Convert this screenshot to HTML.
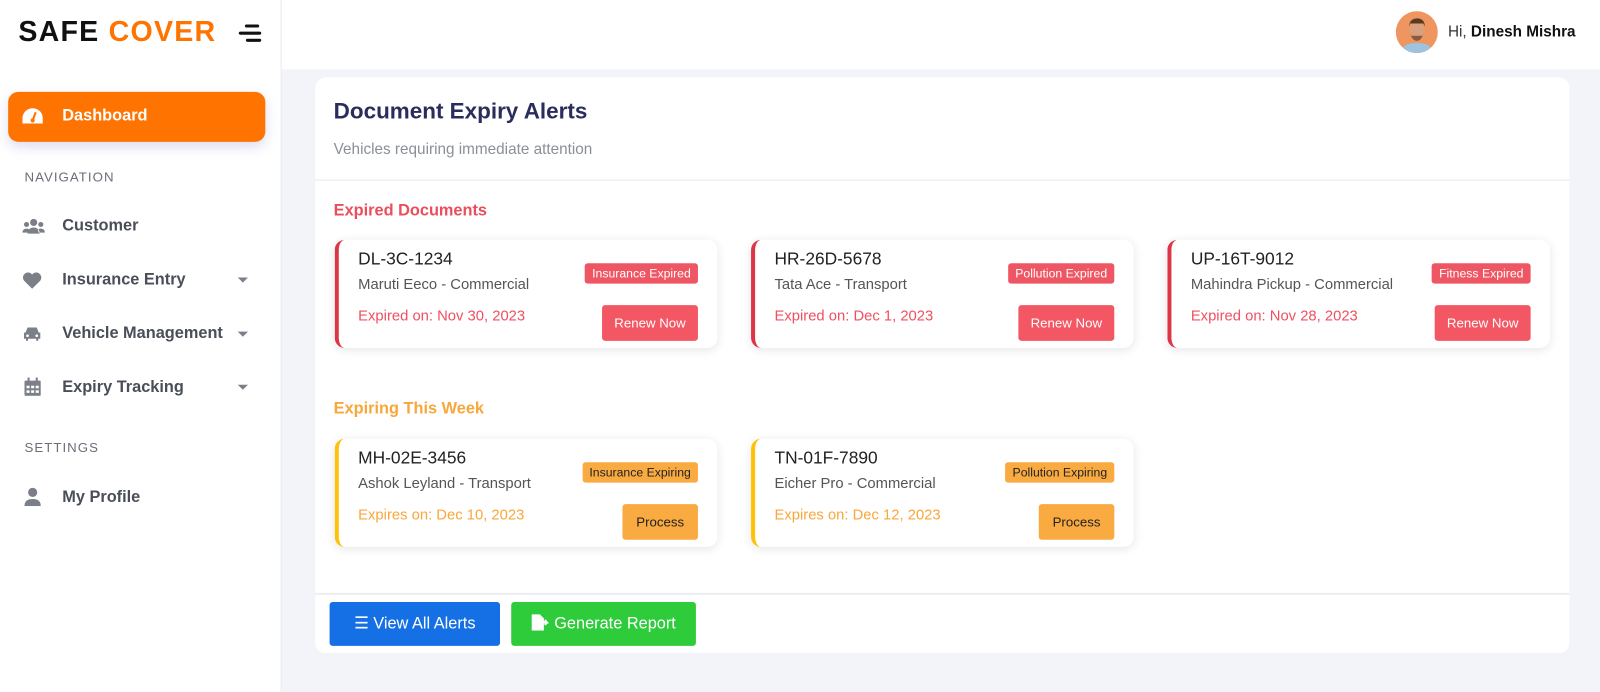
<!DOCTYPE html>
<html><head><meta charset="utf-8"><style>
*{box-sizing:border-box;margin:0;padding:0}
body{width:1600px;height:678px;overflow:hidden;font-family:"Liberation Sans",sans-serif;background:#f3f4f9;position:relative}
.wrap{position:absolute;left:0;top:0;width:1568px;height:665px;transform:scale(1.020408);transform-origin:0 0}
.sb{position:absolute;left:0;top:0;width:276px;height:678px;background:#fff;border-right:1px solid #e8e9ef}
.logo{position:absolute;left:18px;top:15px;font-size:28px;font-weight:bold;letter-spacing:1.2px}
.logo .a{color:#111}.logo .b{color:#ff7300}
.burger{position:absolute;left:234px;top:24px}
.burger i{display:block;height:2.5px;background:#111;margin-bottom:4.5px;border-radius:2px}
.dash{position:absolute;left:8px;top:90px;width:252px;height:49px;background:#ff7300;border-radius:10px;box-shadow:0 5px 12px rgba(120,120,200,.25);color:#fff;font-size:16px;font-weight:bold}
.dash span{position:absolute;left:53px;top:15px}
.sec{position:absolute;left:24px;font-size:13px;color:#6b6f78;letter-spacing:1px}
.nav{position:absolute;left:61px;font-size:16px;color:#4a4e58;font-weight:bold}
.ic{position:absolute;left:22px}
.car{position:absolute;left:233px;width:0;height:0;border-left:5px solid transparent;border-right:5px solid transparent;border-top:5px solid #7b7f88}
.hdr{position:absolute;left:276px;top:0;width:1324px;height:68px;background:#fff}
.av{position:absolute;left:1368px;top:11px;width:41px;height:41px;border-radius:50%;background:#f0955c;overflow:hidden}
.hi{position:absolute;left:1419px;top:23px;font-size:15px;color:#333}
.card{position:absolute;left:309px;top:76px;width:1229px;height:564px;background:#fff;border-radius:10px}
.t{position:absolute;left:18px;top:20px;font-size:22px;color:#2a2d5c;font-weight:bold}
.st{position:absolute;left:18px;top:62px;font-size:15px;color:#8a8f98}
.hr{position:absolute;left:0;width:1229px;height:1px;background:#e6e7ec}
.h2{position:absolute;left:18px;font-size:16px;font-weight:bold}
.ac{position:absolute;width:375px;height:106px;background:#fff;border-radius:10px;box-shadow:0 2px 10px rgba(0,0,0,.10);border-left:4px solid #dc3545}
.ac.y{border-left-color:#ffc107}
.pl{position:absolute;left:19px;top:9px;font-size:17px;color:#222}
.md{position:absolute;left:19px;top:36px;font-size:14.5px;color:#555}
.ex{position:absolute;left:19px;top:67px;font-size:14.5px;color:#ef5060}
.y .ex{color:#f8a73b}
.bd{position:absolute;right:19px;top:23px;height:20px;padding:0 7px;font-size:12px;line-height:20px;color:#fff;background:#ef5663;border-radius:3px}
.y .bd{background:#f9aa40;color:#222}
.bt{position:absolute;right:19px;top:64px;height:35px;width:94px;text-align:center;line-height:35px;font-size:13px;color:#fff;background:#f25763;border-radius:3px}
.y .bt{background:#f9aa40;color:#222;width:74px}
.btn{position:absolute;top:514px;height:43px;border-radius:3px;color:#fff;font-size:16px;line-height:43px;text-align:center}
</style></head><body><div class="wrap">
<div class="sb">
<div class="logo"><span class="a">SAFE</span> <span class="b">COVER</span></div>
<div class="burger"><i style="width:14px;margin-left:6px"></i><i style="width:22px"></i><i style="width:15px;margin-left:7px"></i></div>
<div class="dash"><svg style="position:absolute;left:14px;top:16px" width="20" height="16" viewBox="0 0 20 16"><path d="M10 0A10 10 0 0 0 0 10v5h20v-5A10 10 0 0 0 10 0z" fill="#fff"/><path d="M10 12L13 4" stroke="#ff7300" stroke-width="2"/><circle cx="10" cy="12" r="2" fill="#ff7300"/></svg><span>Dashboard</span></div>
<div class="sec" style="top:166px">NAVIGATION</div>
<svg class="ic" style="top:214px" width="22" height="16" viewBox="0 0 22 16"><circle cx="11" cy="4" r="3.5" fill="#7b7f88"/><circle cx="4" cy="6" r="2.5" fill="#7b7f88"/><circle cx="18" cy="6" r="2.5" fill="#7b7f88"/><path d="M5 15c0-4 3-6 6-6s6 2 6 6z M0 14c0-3 2-4 4-4s3 1 3 1l-1 3z M22 14c0-3-2-4-4-4s-3 1-3 1l1 3z" fill="#7b7f88"/></svg>
<div class="nav" style="top:213px">Customer</div>
<svg class="ic" style="top:267px" width="19" height="16" viewBox="0 0 19 16"><path d="M9.5 16L1.5 8A4.6 4.6 0 0 1 9.5 2a4.6 4.6 0 0 1 8 6z" fill="#7b7f88"/></svg>
<div class="nav" style="top:266px">Insurance Entry</div><div class="car" style="top:272px"></div>
<svg class="ic" style="top:320px" width="19" height="14" viewBox="0 0 19 14"><path d="M3 6l2-5h9l2 5h1.5v6h-2v2h-2v-2h-8v2h-2v-2h-2V6z" fill="#7b7f88"/><circle cx="5" cy="9" r="1.3" fill="#fff"/><circle cx="14" cy="9" r="1.3" fill="#fff"/></svg>
<div class="nav" style="top:318px">Vehicle Management</div><div class="car" style="top:325px"></div>
<svg class="ic" style="top:370px;left:24px" width="16" height="18" viewBox="0 0 16 18"><rect x="0" y="3" width="16" height="15" rx="1" fill="#7b7f88"/><rect x="3" y="0" width="2" height="4" fill="#7b7f88"/><rect x="11" y="0" width="2" height="4" fill="#7b7f88"/><g fill="#fff"><rect x="2" y="8" width="3" height="2.5"/><rect x="6.5" y="8" width="3" height="2.5"/><rect x="11" y="8" width="3" height="2.5"/><rect x="2" y="12.5" width="3" height="2.5"/><rect x="6.5" y="12.5" width="3" height="2.5"/><rect x="11" y="12.5" width="3" height="2.5"/></g></svg>
<div class="nav" style="top:371px">Expiry Tracking</div><div class="car" style="top:377px"></div>
<div class="sec" style="top:431px">SETTINGS</div>
<svg class="ic" style="top:478px;left:24px" width="16" height="18" viewBox="0 0 16 18"><circle cx="8" cy="4.5" r="4.5" fill="#7b7f88"/><path d="M0 18c0-5 3-7 8-7s8 2 8 7z" fill="#7b7f88"/></svg>
<div class="nav" style="top:479px">My Profile</div>
</div>
<div class="hdr"></div>
<div class="av"><svg width="41" height="41" viewBox="0 0 41 41"><rect width="41" height="41" fill="#ef9660"/><path d="M4 41c2-8 9-10 16.5-10S35 33 37 41z" fill="#9cc3e0"/><ellipse cx="20.5" cy="19" rx="7" ry="9" fill="#d9a07e"/><path d="M13 15c0-6 4-8 8-8s8 3 7 8l-1-3h-13z" fill="#5a3b22"/><path d="M14 21c1 6 4 8 6.5 8s5.5-2 6.5-8l-1 3h-11z" fill="#8a5a3a"/></svg></div>
<div class="hi">Hi, <b style="color:#111">Dinesh Mishra</b></div>
<div class="card">
<div class="t">Document Expiry Alerts</div>
<div class="st">Vehicles requiring immediate attention</div>
<div class="hr" style="top:100px"></div>
<div class="h2" style="top:122px;color:#ea4e5d">Expired Documents</div>
<div class="ac" style="left:19px;top:159px"><div class="pl">DL-3C-1234</div><div class="md">Maruti Eeco - Commercial</div><div class="ex">Expired on: Nov 30, 2023</div><div class="bd">Insurance Expired</div><div class="bt">Renew Now</div></div>
<div class="ac" style="left:427px;top:159px"><div class="pl">HR-26D-5678</div><div class="md">Tata Ace - Transport</div><div class="ex">Expired on: Dec 1, 2023</div><div class="bd">Pollution Expired</div><div class="bt">Renew Now</div></div>
<div class="ac" style="left:835px;top:159px"><div class="pl">UP-16T-9012</div><div class="md">Mahindra Pickup - Commercial</div><div class="ex">Expired on: Nov 28, 2023</div><div class="bd">Fitness Expired</div><div class="bt">Renew Now</div></div>
<div class="h2" style="top:316px;color:#f8a73b">Expiring This Week</div>
<div class="ac y" style="left:19px;top:354px"><div class="pl">MH-02E-3456</div><div class="md">Ashok Leyland - Transport</div><div class="ex">Expires on: Dec 10, 2023</div><div class="bd">Insurance Expiring</div><div class="bt">Process</div></div>
<div class="ac y" style="left:427px;top:354px"><div class="pl">TN-01F-7890</div><div class="md">Eicher Pro - Commercial</div><div class="ex">Expires on: Dec 12, 2023</div><div class="bd">Pollution Expiring</div><div class="bt">Process</div></div>
<div class="hr" style="top:505px;height:2px;background:#eceef2"></div>
<div class="btn" style="left:14px;width:167px;background:#1570e6">☰ View All Alerts</div>
<div class="btn" style="left:192px;width:181px;background:#2ecc3a"><svg width="18" height="16" viewBox="0 0 18 16" style="vertical-align:-2px"><path d="M0 0h8l4 4v12H0z" fill="#fff"/><path d="M9 8h6l-2-2.5M15 8l-2 2.5" stroke="#fff" stroke-width="2" fill="none"/></svg> Generate Report</div>
</div>
</div></body></html>
